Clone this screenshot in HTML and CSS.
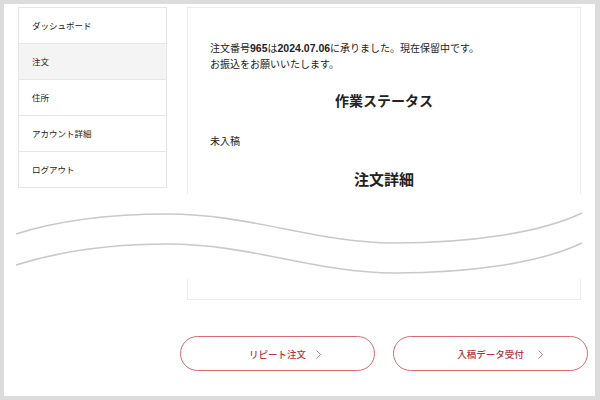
FILE: index.html
```html
<!DOCTYPE html>
<html lang="ja">
	<head>
		<title>注文詳細</title>
		<meta charset="UTF-8">
		<meta name="viewport" content="width=device-width, initial-scale=1.0">
		<link rel="stylesheet" href="styles.css">
	</head>
	<body>
		<div class="frame">
			<div class="account">
				<ul class="account-nav">
					<li>ダッシュボード</li>
					<li class="active">注文</li>
					<li>住所</li>
					<li>アカウント詳細</li>
					<li>ログアウト</li>
				</ul>
				<div class="order-content">
					<p>注文番号<b>965</b>は<b>2024.07.06</b>に承りました。現在保留中です。<br>お振込をお願いいたします。</p>
					<h2 class="status-title">作業ステータス</h2>
					<p class="status">未入稿</p>
					<h2 class="detail-title">注文詳細</h2>
				</div>
			</div>

			<div class="actions">
				<a class="btn">リピート注文<svg class="chev" width="5" height="9" viewBox="0 0 5 9"><polyline points="0.5,0.5 4.5,4.5 0.5,8.5" /></svg></a>
				<a class="btn">入稿データ受付<svg class="chev" width="5" height="9" viewBox="0 0 5 9"><polyline points="0.5,0.5 4.5,4.5 0.5,8.5" /></svg></a>
			</div>

			<!-- 省略の波線 -->
			<div class="cut">
				<svg width="591" height="85" viewBox="4 194 591 85">
					<path d="M16 234 C 60 220, 110 214, 168 214 C 250 214, 316 243, 394 243 C 470 243, 540 233, 582 213" />
					<path d="M16 265 C 60 251, 110 244, 168 244 C 250 244, 316 273, 394 273 C 470 273, 540 263, 582 243" />
				</svg>
			</div>
		</div>
	</body>
</html>
```

FILE: styles.css
```css
body {
	margin: 0;
	background: #dcdcdc;
	font-family: "Noto Sans CJK JP", "Noto Sans", sans-serif;
	color: #222;
}
.frame {
	position: relative;
	box-sizing: border-box;
	width: 591px;
	height: 392px;
	margin: 4px 0 0 4px;
	background: #fff;
	padding: 3px 0 0 14px;
}
.account {
	display: flex;
	align-items: flex-start;
	gap: 20px;
}
.account-nav {
	list-style: none;
	margin: 0;
	padding: 0;
	width: 149px;
	box-sizing: border-box;
	border: 1px solid #e6e6e6;
	border-bottom: none;
}
.account-nav li {
	height: 35px;
	line-height: 35px;
	padding-left: 13px;
	font-size: 8.5px;
	color: #1a1a1a;
	border-bottom: 1px solid #e6e6e6;
}
.account-nav li.active {
	background: #f4f4f4;
}
.order-content {
	box-sizing: border-box;
	width: 394px;
	height: 293px;
	border: 1px solid #ececec;
	padding: 32px 22px 0 22px;
}
.order-content p {
	margin: 0;
	font-size: 10px;
	line-height: 16px;
}
.order-content b {
	font-family: "Liberation Sans", sans-serif;
	font-weight: bold;
	font-size: 10.5px;
}
.order-content h2 {
	margin: 0;
	text-align: center;
	font-size: 14px;
	line-height: 20px;
	font-weight: bold;
}
.status-title {
	margin-top: 18px !important;
}
.status {
	margin-top: 23px !important;
}
.detail-title {
	margin-top: 20px !important;
	font-size: 15px !important;
}
.actions {
	display: flex;
	gap: 18px;
	margin: 36px 0 0 162px;
}
.btn {
	position: relative;
	box-sizing: border-box;
	width: 195px;
	height: 35px;
	border: 1px solid #d56c6f;
	border-radius: 18px;
	display: flex;
	justify-content: center;
	align-items: center;
	color: #b3343c;
	font-size: 9.5px;
	font-weight: 500;
	text-decoration: none;
}
.chev {
	position: absolute;
	top: 13px;
	fill: none;
	stroke: #cf6b70;
	stroke-width: 0.9;
}
.btn:first-child .chev {
	left: 135px;
}
.btn:last-child .chev {
	left: 144px;
}
.cut {
	position: absolute;
	left: 0;
	top: 190px;
	width: 591px;
	height: 85px;
	background: #fff;
}
.cut svg {
	display: block;
}
.cut path {
	fill: none;
	stroke: #c9c9c9;
	stroke-width: 1.6;
}
```
